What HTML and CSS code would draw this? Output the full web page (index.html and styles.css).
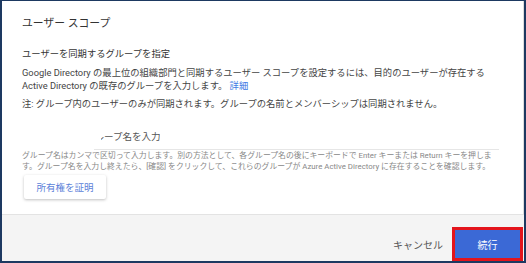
FILE: index.html
```html
<!DOCTYPE html>
<html lang="ja">
<head>
<meta charset="utf-8">
<link rel="stylesheet" href="styles.css">
</head>
<body>
<div class="frame">
  <section class="card">
    <h1 class="title">ユーザー スコープ</h1>
    <h2 class="subtitle">ユーザーを同期するグループを指定</h2>
    <p class="para">Google Directory の最上位の組織部門と同期するユーザー スコープを設定するには、目的のユーザーが存在する<br>Active Directory の既存のグループを入力します。 <a class="link">詳細</a></p>
    <p class="para note">注: グループ内のユーザーのみが同期されます。グループの名前とメンバーシップは同期されません。</p>
    <div class="field">
      <div class="field-label"><span class="clip"><span class="clip-inner">ループ名を入力</span></span></div>
      <div class="field-line"></div>
    </div>
    <p class="helper">グループ名はカンマで区切って入力します。別の方法として、各グループ名の後にキーボードで Enter キーまたは Return キーを押しま<br>す。グループ名を入力し終えたら、[確認] をクリックして、これらのグループが Azure Active Directory に存在することを確認します。</p>
    <button class="btn-verify">所有権を証明</button>
  </section>
  <footer class="footer">
    <span class="cancel">キャンセル</span>
    <span class="highlight"><button class="btn-continue">続行</button></span>
  </footer>
</div>
</body>
</html>
```

FILE: styles.css
```css
* { box-sizing: border-box; }
html, body { margin: 0; padding: 0; }
body {
  width: 526px;
  height: 263px;
  overflow: hidden;
  font-family: Roboto, "Noto Sans CJK JP", sans-serif;
  color: #333;
}
.frame {
  width: 526px;
  height: 263px;
  border-style: solid;
  border-color: #1d3961;
  border-width: 1px 2px 2px 2px;
  display: flex;
  flex-direction: column;
  background: #f4f4f4;
}
.card {
  background: #fff;
  height: 214px;
  border-right: 1px solid #dcdcdc;
  border-bottom: 1px solid #e3e3e3;
  padding: 16px 22px 0 20px;
  display: flex;
  flex-direction: column;
  align-items: flex-start;
}
.title {
  margin: 0;
  font-size: 10.8px;
  font-weight: 400;
  line-height: 14px;
  color: #333;
}
.subtitle {
  margin: 16px 0 0;
  font-size: 9.3px;
  font-weight: 400;
  line-height: 14px;
  color: #333;
}
.para {
  margin: 5px 0 0;
  font-size: 9.3px;
  line-height: 13px;
  color: #444;
  white-space: nowrap;
}
.note { margin-top: 5px; }
.link { color: #3d7be4; }
.field {
  align-self: stretch;
  margin: 20px 0 0 70px;
}
.field-label {
  font-size: 9.5px;
  line-height: 13px;
  color: #555;
  padding-left: 9px;
  padding-bottom: 6px;
}
.clip {
  display: inline-block;
  overflow: hidden;
  vertical-align: top;
}
.clip-inner {
  display: inline-block;
  margin-left: -6.5px;
}
.field-line {
  height: 1px;
  background: #e6e6e6;
  margin: 0 0 0 2px;
  width: 405px;
}
.helper {
  margin: 0;
  font-size: 7.85px;
  line-height: 11px;
  color: #888;
  white-space: nowrap;
}
.btn-verify {
  margin-top: 3px;
  margin-left: 2px;
  width: 82px;
  height: 24px;
  border: none;
  border-radius: 2px;
  background: #fff;
  box-shadow: 0 1px 3px rgba(0,0,0,0.25);
  font-family: inherit;
  font-size: 9.5px;
  color: #5b7fd9;
  padding: 0;
}
.footer {
  flex: 1;
  display: flex;
  align-items: center;
  justify-content: flex-end;
  padding-right: 1px;
  padding-top: 12px;
}
.cancel {
  font-size: 10px;
  color: #555;
  margin-right: 9px;
}
.highlight {
  display: flex;
  border: 3px solid #e3141c;
}
.btn-continue {
  width: 65px;
  height: 28px;
  border: none;
  background: #3b69d6;
  color: #fff;
  font-family: inherit;
  font-size: 10px;
  padding: 0;
}
```
